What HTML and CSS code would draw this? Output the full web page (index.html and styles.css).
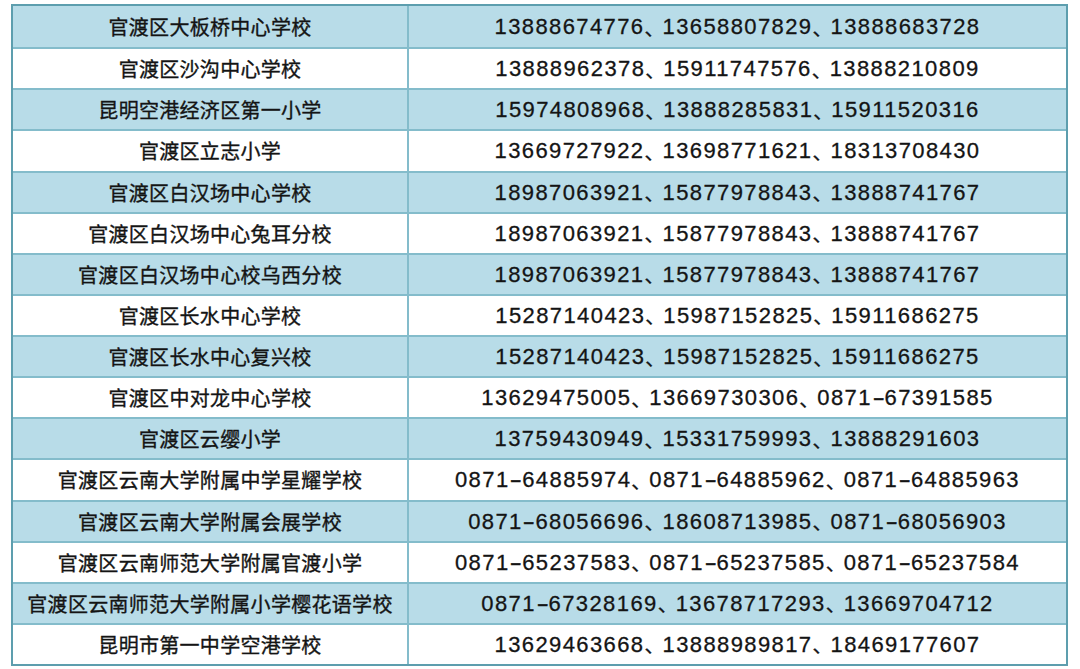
FILE: index.html
```html
<!DOCTYPE html>
<html lang="zh">
<head>
<meta charset="utf-8">
<link rel="stylesheet" href="styles.css">
</head>
<body>
<div class="table">
  <div class="cell name blue first">官渡区大板桥中心学校</div><div class="cell tel blue first">13888674776<span class="sep">、</span>13658807829<span class="sep">、</span>13888683728</div>
  <div class="cell name">官渡区沙沟中心学校</div><div class="cell tel">13888962378<span class="sep">、</span>15911747576<span class="sep">、</span>13888210809</div>
  <div class="cell name blue">昆明空港经济区第一小学</div><div class="cell tel blue">15974808968<span class="sep">、</span>13888285831<span class="sep">、</span>15911520316</div>
  <div class="cell name">官渡区立志小学</div><div class="cell tel">13669727922<span class="sep">、</span>13698771621<span class="sep">、</span>18313708430</div>
  <div class="cell name blue">官渡区白汉场中心学校</div><div class="cell tel blue">18987063921<span class="sep">、</span>15877978843<span class="sep">、</span>13888741767</div>
  <div class="cell name">官渡区白汉场中心兔耳分校</div><div class="cell tel">18987063921<span class="sep">、</span>15877978843<span class="sep">、</span>13888741767</div>
  <div class="cell name blue">官渡区白汉场中心校乌西分校</div><div class="cell tel blue">18987063921<span class="sep">、</span>15877978843<span class="sep">、</span>13888741767</div>
  <div class="cell name">官渡区长水中心学校</div><div class="cell tel">15287140423<span class="sep">、</span>15987152825<span class="sep">、</span>15911686275</div>
  <div class="cell name blue">官渡区长水中心复兴校</div><div class="cell tel blue">15287140423<span class="sep">、</span>15987152825<span class="sep">、</span>15911686275</div>
  <div class="cell name">官渡区中对龙中心学校</div><div class="cell tel">13629475005<span class="sep">、</span>13669730306<span class="sep">、</span>0871<span class="dash">-</span>67391585</div>
  <div class="cell name blue">官渡区云缨小学</div><div class="cell tel blue">13759430949<span class="sep">、</span>15331759993<span class="sep">、</span>13888291603</div>
  <div class="cell name">官渡区云南大学附属中学星耀学校</div><div class="cell tel">0871<span class="dash">-</span>64885974<span class="sep">、</span>0871<span class="dash">-</span>64885962<span class="sep">、</span>0871<span class="dash">-</span>64885963</div>
  <div class="cell name blue">官渡区云南大学附属会展学校</div><div class="cell tel blue">0871<span class="dash">-</span>68056696<span class="sep">、</span>18608713985<span class="sep">、</span>0871<span class="dash">-</span>68056903</div>
  <div class="cell name">官渡区云南师范大学附属官渡小学</div><div class="cell tel">0871<span class="dash">-</span>65237583<span class="sep">、</span>0871<span class="dash">-</span>65237585<span class="sep">、</span>0871<span class="dash">-</span>65237584</div>
  <div class="cell name blue">官渡区云南师范大学附属小学樱花语学校</div><div class="cell tel blue">0871<span class="dash">-</span>67328169<span class="sep">、</span>13678717293<span class="sep">、</span>13669704712</div>
  <div class="cell name">昆明市第一中学空港学校</div><div class="cell tel">13629463668<span class="sep">、</span>13888989817<span class="sep">、</span>18469177607</div>
</div>
</body>
</html>
```
FILE: styles.css
```css
html, body {
  margin: 0;
  padding: 0;
  background: #ffffff;
}
body {
  padding: 4px 0 0 11px;
}
.table {
  box-sizing: border-box;
  width: 1057px;
  height: 662px;
  border: 2px solid #5d9eae;
  display: grid;
  grid-template-columns: 394px 1fr;
  grid-template-rows: repeat(16, 1fr);
  background: #ffffff;
}
.cell {
  display: flex;
  align-items: center;
  justify-content: center;
  border-top: 2px solid #84bccb;
  color: #141414;
  white-space: nowrap;
}
.cell.first {
  border-top: none;
}
.blue {
  background: #b8dce8;
}
.name {
  font-family: "Noto Sans CJK SC", "Noto Sans", sans-serif;
  font-size: 20px;
  letter-spacing: 0.3px;
  -webkit-text-stroke: 0.35px #141414;
}
.tel {
  border-left: 2px solid #84bccb;
  font-family: "Liberation Sans", Arial, "Noto Sans CJK SC", sans-serif;
  font-size: 22px;
  letter-spacing: 1.4px;
  padding-top: 1px;
  -webkit-text-stroke: 0.3px #141414;
}
.sep {
  font-family: "Noto Sans CJK SC", sans-serif;
  font-size: 20px;
  letter-spacing: -2px;
}
.dash {
  display: inline-block;
  margin: 0 2.7px;
  letter-spacing: 0;
  transform: scaleX(1.7);
}
```
